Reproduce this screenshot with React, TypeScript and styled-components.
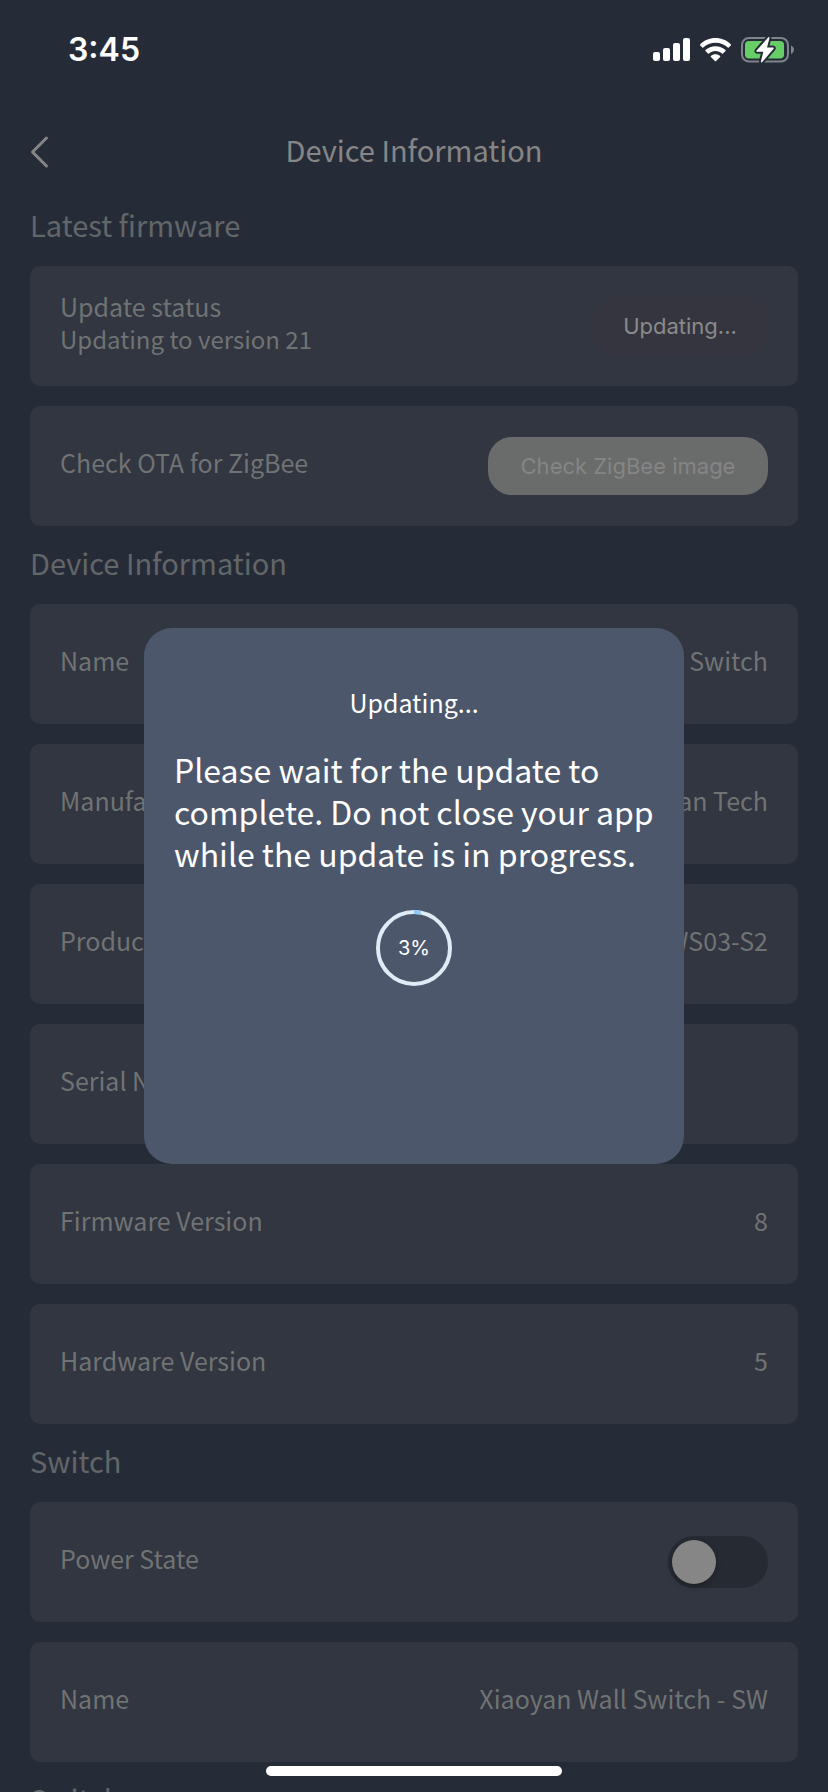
import React from "react";
import styled, { createGlobalStyle } from "styled-components";

const textFont = `"Noto Sans CJK SC", "Noto Sans", sans-serif`;
const systemFont = `Inter, Roboto, sans-serif`;

const GlobalStyle = createGlobalStyle`
  *, *::before, *::after { box-sizing: border-box; }
  body { margin: 0; background: #262c37; font-family: ${textFont}; }
  h1, h2, p { margin: 0; font-weight: 400; }
  button { border: 0; margin: 0; }
`;

const Screen = styled.div`
  display: flex;
  flex-direction: column;
  height: 100vh;
  overflow: hidden;
  background: #262c37;
`;

const StatusBar = styled.div`
  display: flex;
  flex: none;
  align-items: center;
  justify-content: space-between;
  height: 100px;
  padding: 0 34px 0 68px;
  color: #ffffff;
  font-family: ${systemFont};
  font-size: 32px;
  font-weight: 600;
  line-height: 40px;
`;

const StatusIcons = styled.div`
  display: flex;
  align-items: center;
  gap: 10px;
`;

const Header = styled.header`
  display: grid;
  flex: none;
  grid-template-columns: 48px 1fr 48px;
  align-items: center;
  height: 88px;
  padding: 16px 30px 0;
`;

const BackButton = styled.button`
  display: flex;
  align-items: center;
  height: 48px;
  padding: 0;
  background: none;
  color: #868686;
`;

const Title = styled.h1`
  padding-bottom: 6px;
  color: #868686;
  font-size: 29px;
  line-height: 44px;
  text-align: center;
`;

const Content = styled.main`
  flex: 1;
  min-height: 0;
  padding: 0 30px;
  overflow-y: auto;
  scrollbar-width: none;
`;

const SectionTitle = styled.h2`
  height: 78px;
  padding: 14px 0 20px;
  color: #626669;
  font-size: 29px;
  line-height: 44px;
`;

const CardList = styled.div`
  display: flex;
  flex-direction: column;
  gap: 20px;
`;

const Card = styled.div`
  display: flex;
  align-items: center;
  justify-content: space-between;
  min-height: 120px;
  padding: 0 30px;
  border-radius: 10px;
  background: #323640;
  color: #707373;
`;

const CardText = styled.div`
  display: flex;
  flex-direction: column;
  padding-bottom: 8px;
`;

const Label = styled.label`
  font-size: 25px;
  line-height: 34px;
`;

const Detail = styled.span`
  font-size: 24px;
  line-height: 32px;
`;

const ActionButton = styled.button<{ $busy?: boolean }>`
  min-width: ${(p) => (p.$busy ? 176 : 280)}px;
  height: 58px;
  padding: 0 20px;
  border-radius: 24px;
  background: ${(p) => (p.$busy ? "#35353f" : "#696c6b")};
  color: ${(p) => (p.$busy ? "#8a8a8a" : "#858585")};
  font-family: ${systemFont};
  font-size: 22px;
  line-height: 30px;
`;

const Toggle = styled.input`
  appearance: none;
  display: flex;
  width: 100px;
  height: 52px;
  margin: 0;
  padding: 4px;
  border-radius: 26px;
  background: #262a32;

  &::before {
    content: "";
    width: 44px;
    height: 44px;
    border-radius: 50%;
    background: #868686;
    box-shadow: 0 2px 6px rgba(0, 0, 0, 0.3);
  }

  &:checked {
    justify-content: flex-end;
  }
`;

const Overlay = styled.div`
  position: fixed;
  inset: 0;
  display: flex;
  align-items: center;
  justify-content: center;
`;

const Dialog = styled.div`
  display: flex;
  flex-direction: column;
  align-items: center;
  width: 540px;
  max-width: 90%;
  min-height: 536px;
  padding: 54px 30px 30px;
  border-radius: 28px;
  background: #4d576b;
  color: #ffffff;
`;

const DialogTitle = styled.h2`
  font-size: 25px;
  line-height: 40px;
`;

const DialogText = styled.p`
  align-self: stretch;
  margin-top: 26px;
  font-size: 32px;
  line-height: 42px;
`;

const Progress = styled.div`
  display: grid;
  margin-top: 36px;
  place-items: center;

  > * {
    grid-area: 1 / 1;
  }
`;

const ProgressValue = styled.span`
  font-family: ${systemFont};
  font-size: 20px;
  line-height: 24px;
`;

const HomeIndicator = styled.div`
  position: fixed;
  right: 0;
  bottom: 16px;
  left: 0;
  width: 296px;
  height: 10px;
  margin: 0 auto;
  border-radius: 5px;
  background: #ffffff;
`;

function SignalIcon() {
  return (
    <svg width="37" height="24" viewBox="0 0 37 24" fill="#fff" aria-hidden="true">
      <rect x="0" y="14" width="7" height="9" rx="2" />
      <rect x="10" y="10" width="7" height="13" rx="2" />
      <rect x="20" y="5" width="7" height="18" rx="2" />
      <rect x="30" y="0" width="7" height="23" rx="2" />
    </svg>
  );
}

function WifiIcon() {
  return (
    <svg width="31" height="24" viewBox="0 0 31 24" fill="#fff" aria-hidden="true">
      <path d="M15.5 0C21.500 0 27 2.300 31 6.400Q31.400 6.900 31 7.300L28.700 9.600Q28.200 10 27.800 9.600C24.500 6.400 20.100 4.700 15.500 4.700S6.500 6.400 3.200 9.600Q2.800 10 2.300 9.600L0 7.300Q-.4 6.900 0 6.400C4 2.300 9.500 0 15.500 0Z" />
      <path d="M15.500 8.200C19.300 8.200 22.800 9.600 25.500 12.100Q26 12.600 25.500 13.100L23 15.500Q22.600 15.900 22.100 15.500C20.300 13.900 18 12.900 15.500 12.900S10.700 13.900 8.900 15.500Q8.400 15.900 8 15.500L5.500 13.100Q5 12.600 5.500 12.100C8.200 9.600 11.700 8.200 15.500 8.200Z" />
      <path d="M15.500 16.300C17.300 16.300 18.900 16.900 20.100 17.900Q20.600 18.400 20.100 18.900L16.100 23Q15.500 23.500 14.900 23L10.900 18.900Q10.400 18.400 10.900 17.900C12.100 16.900 13.700 16.300 15.500 16.300Z" />
    </svg>
  );
}

function BatteryIcon() {
  return (
    <svg width="53" height="26" viewBox="0 0 53 26" aria-hidden="true">
      <rect x="1" y="1" width="46" height="23.500" rx="7" fill="none" stroke="#7f838a" strokeWidth="2" />
      <path d="M50 8.500C51.800 9.200 53 10.800 53 12.700S51.800 16.200 50 16.900Z" fill="#7f838a" />
      <rect x="4" y="4" width="39" height="17.500" rx="4" fill="#67ce67" />
      <path
        d="M27.500 0L15.600 13.600Q15 14.700 16.200 14.800H22.300L19.900 24.500Q20.200 26 21.300 25L32.600 11.700Q33.200 10.600 32 10.500H26L28.500 1Q28.300 -.5 27.500 0Z"
        fill="#fff"
        stroke="#262c37"
        strokeWidth="4"
        strokeLinejoin="round"
        paintOrder="stroke"
      />
    </svg>
  );
}

function BackIcon() {
  return (
    <svg width="20" height="34" viewBox="0 0 20 34" fill="none" aria-hidden="true">
      <path d="M16.500 3L2.500 17L16.500 31" stroke="currentColor" strokeWidth="3" strokeLinecap="round" strokeLinejoin="round" />
    </svg>
  );
}

function ProgressRing({ value }: { value: number }) {
  return (
    <Progress role="progressbar" aria-valuenow={value} aria-valuemin={0} aria-valuemax={100} aria-label="Update progress">
      <svg width="76" height="76" viewBox="0 0 76 76" fill="none" aria-hidden="true">
        <circle cx="38" cy="38" r="36" stroke="#dfebf5" strokeWidth="4" />
        <circle
          cx="38"
          cy="38"
          r="36"
          stroke="#90caf9"
          strokeWidth="4"
          pathLength="100"
          strokeDasharray={`${value} 100`}
          transform="rotate(-90 38 38)"
        />
      </svg>
      <ProgressValue>{value}%</ProgressValue>
    </Progress>
  );
}

const deviceRows = [
  { label: "Name", value: "Xiaoyan Wall Switch" },
  { label: "Manufacturer", value: "Xiaoyan Tech" },
  { label: "Product", value: "TERNCY-WS03-S2" },
  { label: "Serial Number", value: "" },
  { label: "Firmware Version", value: "8" },
  { label: "Hardware Version", value: "5" },
];

function InfoRow({ label, value }: { label: string; value: string }) {
  return (
    <Card>
      <CardText>
        <Label as="span">{label}</Label>
      </CardText>
      <CardText>
        <Label as="span">{value}</Label>
      </CardText>
    </Card>
  );
}

export default function App() {
  return (
    <>
      <GlobalStyle />
      <Screen>
        <StatusBar>
          <span>3:45</span>
          <StatusIcons>
            <SignalIcon />
            <WifiIcon />
            <BatteryIcon />
          </StatusIcons>
        </StatusBar>
        <Header>
          <BackButton aria-label="Back">
            <BackIcon />
          </BackButton>
          <Title>Device Information</Title>
        </Header>
        <Content>
          <SectionTitle>Latest firmware</SectionTitle>
          <CardList>
            <Card>
              <CardText>
                <Label as="span">Update status</Label>
                <Detail>Updating to version 21</Detail>
              </CardText>
              <ActionButton $busy>Updating...</ActionButton>
            </Card>
            <Card>
              <CardText>
                <Label as="span">Check OTA for ZigBee</Label>
              </CardText>
              <ActionButton>Check ZigBee image</ActionButton>
            </Card>
          </CardList>
          <SectionTitle>Device Information</SectionTitle>
          <CardList>
            {deviceRows.map((row) => (
              <InfoRow key={row.label} label={row.label} value={row.value} />
            ))}
          </CardList>
          <SectionTitle>Switch</SectionTitle>
          <CardList>
            <Card>
              <CardText>
                <Label htmlFor="power-state">Power State</Label>
              </CardText>
              <Toggle id="power-state" type="checkbox" role="switch" />
            </Card>
            <InfoRow label="Name" value="Xiaoyan Wall Switch - SW" />
          </CardList>
          <SectionTitle>Switch</SectionTitle>
        </Content>
      </Screen>
      <Overlay>
        <Dialog role="dialog" aria-modal="true" aria-labelledby="update-title">
          <DialogTitle id="update-title">Updating...</DialogTitle>
          <DialogText>
            Please wait for the update to complete. Do not close your app while the update is in progress.
          </DialogText>
          <ProgressRing value={3} />
        </Dialog>
      </Overlay>
      <HomeIndicator />
    </>
  );
}
